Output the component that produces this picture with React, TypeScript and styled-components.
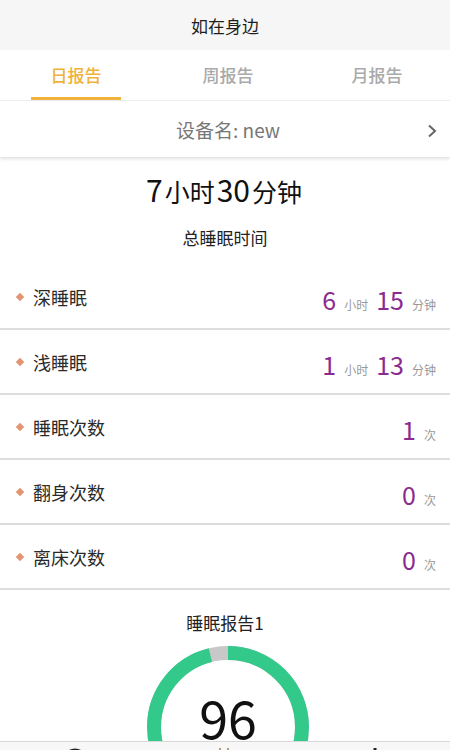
import { FC, Fragment } from 'react';
import styled, { createGlobalStyle } from 'styled-components';

const FONT = `"Noto Sans CJK SC", "Noto Sans", sans-serif`;
const ORANGE = '#f0b23a';
const PURPLE = '#8b2a8f';
const GREEN = '#33c98a';

const GlobalStyle = createGlobalStyle`
  html, body {
    margin: 0;
    padding: 0;
    background: #ffffff;
    font-family: ${FONT};
  }
`;

const SPage = styled.div`
  width: 450px;
  height: 750px;
  overflow: hidden;
  display: flex;
  flex-direction: column;
  background: #ffffff;
  position: relative;
`;
const SHeader = styled.div`
  height: 50px;
  flex-shrink: 0;
  background: #f6f6f6;
  display: flex;
  align-items: center;
  justify-content: center;
  font-size: 17px;
  color: #1e1e1e;
`;
const STabs = styled.div`
  height: 50px;
  flex-shrink: 0;
  display: grid;
  grid-template-columns: 152px 152px 146px;
  border-bottom: 1px solid #eeeeee;
`;
const STab = styled.div<{ active?: boolean }>`
  display: flex;
  align-items: center;
  justify-content: center;
  font-size: 17px;
  font-weight: 500;
  color: ${({ active }) => (active ? ORANGE : '#aaaaaa')};
  position: relative;
  padding-bottom: 2px;

  &::after {
    content: '';
    display: ${({ active }) => (active ? 'block' : 'none')};
    position: absolute;
    left: 31px;
    width: 90px;
    bottom: 0;
    height: 3px;
    background: ${ORANGE};
  }
`;
const SDeviceRow = styled.div`
  height: 56px;
  flex-shrink: 0;
  display: flex;
  align-items: center;
  justify-content: center;
  position: relative;
  font-size: 19px;
  color: #777777;
  padding-left: 6px;
  box-shadow: 0 2px 3px rgba(0, 0, 0, 0.12);
  z-index: 1;
`;
const SChevron = styled.svg`
  position: absolute;
  right: 13px;
  top: 23px;
`;
const SSummary = styled.div`
  display: flex;
  flex-direction: column;
  align-items: center;
  padding-top: 10px;
  height: 108px;
  flex-shrink: 0;
  box-sizing: border-box;
`;
const STotal = styled.div`
  display: flex;
  align-items: baseline;
  color: #111111;
  height: 44px;
`;
const STotalNum = styled.span`
  font-size: 30px;
  margin-right: 2px;
`;
const STotalUnit = styled.span`
  font-size: 25px;
  margin-right: 2px;
`;
const SSubTitle = styled.div`
  font-size: 17px;
  color: #222222;
  margin-top: 14px;
`;
const SList = styled.div`
  display: flex;
  flex-direction: column;
  flex-shrink: 0;
`;
const SRow = styled.div`
  height: 63px;
  display: flex;
  align-items: center;
  justify-content: space-between;
  padding: 0 14px 0 17px;
  border-bottom: 2px solid #dddddd;
`;
const SLabel = styled.div`
  display: flex;
  align-items: center;
  font-size: 18px;
  color: #2a2a2a;
  gap: 10px;
`;
const SDiamond = styled.span`
  width: 6px;
  height: 6px;
  background: #e49470;
  transform: rotate(45deg);
`;
const SValue = styled.div`
  display: flex;
  align-items: baseline;
  padding-top: 4px;
`;
const SNum = styled.span`
  font-size: 25px;
  color: ${PURPLE};
  margin-right: 8px;
`;
const SUnit = styled.span`
  font-size: 12px;
  color: #999999;
  margin-right: 8px;

  &:last-child {
    margin-right: 0;
  }
`;
const SReport = styled.div`
  display: flex;
  flex-direction: column;
  align-items: center;
  padding-top: 20px;
`;
const SReportTitle = styled.div`
  font-size: 17px;
  color: #222222;
`;
const SGauge = styled.div`
  position: relative;
  width: 164px;
  height: 164px;
  margin-top: 10px;
  margin-left: 6px;
`;
const SScore = styled.div`
  position: absolute;
  top: 34px;
  left: 0;
  right: 0;
  text-align: center;
  font-size: 52px;
  color: #111111;
`;
const SBottomBar = styled.div`
  position: absolute;
  left: 0;
  right: 0;
  top: 741px;
  height: 50px;
  background: #f7f7f7;
  border-top: 1px solid #d8d8d8;
  display: grid;
  grid-template-columns: repeat(3, 1fr);
  z-index: 2;
`;
const SNavItem = styled.div`
  display: flex;
  justify-content: center;
  padding-top: 5px;
`;

interface IStat {
  label: string;
  parts: { num: string; unit: string }[];
}

const STATS: IStat[] = [
  {
    label: '深睡眠',
    parts: [
      { num: '6', unit: '小时' },
      { num: '15', unit: '分钟' },
    ],
  },
  {
    label: '浅睡眠',
    parts: [
      { num: '1', unit: '小时' },
      { num: '13', unit: '分钟' },
    ],
  },
  { label: '睡眠次数', parts: [{ num: '1', unit: '次' }] },
  { label: '翻身次数', parts: [{ num: '0', unit: '次' }] },
  { label: '离床次数', parts: [{ num: '0', unit: '次' }] },
];

const Gauge: FC<{ score: number }> = ({ score }) => {
  const r = 74;
  const c = 2 * Math.PI * r;
  return (
    <SGauge>
      <svg width="164" height="164" viewBox="0 0 164 164">
        <circle cx="82" cy="82" r={r} fill="none" stroke="#c8c8c8" strokeWidth="14" />
        <circle
          cx="82"
          cy="82"
          r={r}
          fill="none"
          stroke={GREEN}
          strokeWidth="14"
          strokeDasharray={`${(c * score) / 100} ${c}`}
          transform="rotate(-90 82 82)"
        />
      </svg>
      <SScore>{score}</SScore>
    </SGauge>
  );
};

const App: FC = () => {
  return (
    <SPage>
      <GlobalStyle />
      <SHeader>如在身边</SHeader>
      <STabs>
        <STab active>日报告</STab>
        <STab>周报告</STab>
        <STab>月报告</STab>
      </STabs>
      <SDeviceRow>
        设备名: new
        <SChevron width="10" height="14" viewBox="0 0 10 14">
          <path d="M2 1.5 L8 7 L2 12.5" fill="none" stroke="#666" strokeWidth="2" />
        </SChevron>
      </SDeviceRow>
      <SSummary>
        <STotal>
          <STotalNum>7</STotalNum>
          <STotalUnit>小时</STotalUnit>
          <STotalNum>30</STotalNum>
          <STotalUnit>分钟</STotalUnit>
        </STotal>
        <SSubTitle>总睡眠时间</SSubTitle>
      </SSummary>
      <SList>
        {STATS.map((s) => (
          <SRow key={s.label}>
            <SLabel>
              <SDiamond />
              {s.label}
            </SLabel>
            <SValue>
              {s.parts.map((p) => (
                <Fragment key={p.unit}>
                  <SNum>{p.num}</SNum>
                  <SUnit>{p.unit}</SUnit>
                </Fragment>
              ))}
            </SValue>
          </SRow>
        ))}
      </SList>
      <SReport>
        <SReportTitle>睡眠报告1</SReportTitle>
        <Gauge score={96} />
      </SReport>
      <SBottomBar>
        <SNavItem>
          <svg width="28" height="28" viewBox="0 0 28 28">
            <circle cx="14" cy="14" r="11" fill="none" stroke="#222" strokeWidth="3" />
          </svg>
        </SNavItem>
        <SNavItem>
          <svg width="28" height="28" viewBox="0 0 28 28">
            <path d="M9 1 V10 M17 1 V10" stroke="#b89a7a" strokeWidth="2" />
          </svg>
        </SNavItem>
        <SNavItem>
          <svg width="28" height="28" viewBox="0 0 28 28">
            <path d="M14 1 V14" stroke="#222" strokeWidth="3" />
          </svg>
        </SNavItem>
      </SBottomBar>
    </SPage>
  );
};

export default App;
